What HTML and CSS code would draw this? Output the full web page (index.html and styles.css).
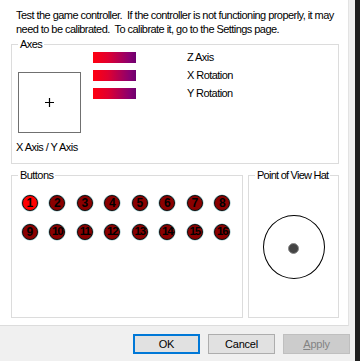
FILE: index.html
```html
<!DOCTYPE html>
<html>
<head>
<meta charset="utf-8">
<link rel="stylesheet" href="styles.css">
</head>
<body>
<div class="window">
  <div class="dialog">
    <div class="page">
      <p class="intro">Test the game controller.&nbsp; If the controller is not functioning properly, it may<br>need to be calibrated.&nbsp; To calibrate it, go to the Settings page.</p>
      <div class="group axes">
        <span class="group-title">Axes</span>
        <div class="axes-body">
          <div class="stick-col">
            <div class="stick">
              <svg width="9" height="9" viewBox="0 0 9 9"><path d="M4.5 0v9M0 4.5h9" stroke="#000" stroke-width="1.2"/></svg>
            </div>
            <div class="stick-label">X Axis / Y Axis</div>
          </div>
          <div class="bars">
            <div class="bar"></div>
            <div class="bar"></div>
            <div class="bar"></div>
          </div>
          <div class="axis-labels">
            <div>Z Axis</div>
            <div>X Rotation</div>
            <div>Y Rotation</div>
          </div>
        </div>
      </div>
      <div class="lower">
        <div class="group buttons">
          <span class="group-title">Buttons</span>
          <div class="btn-grid">
            <div class="cell"><span class="led on">1</span></div>
            <div class="cell"><span class="led">2</span></div>
            <div class="cell"><span class="led">3</span></div>
            <div class="cell"><span class="led">4</span></div>
            <div class="cell"><span class="led">5</span></div>
            <div class="cell"><span class="led">6</span></div>
            <div class="cell"><span class="led">7</span></div>
            <div class="cell"><span class="led">8</span></div>
            <div class="cell"><span class="led">9</span></div>
            <div class="cell"><span class="led two">10</span></div>
            <div class="cell"><span class="led two">11</span></div>
            <div class="cell"><span class="led two">12</span></div>
            <div class="cell"><span class="led two">13</span></div>
            <div class="cell"><span class="led two">14</span></div>
            <div class="cell"><span class="led two">15</span></div>
            <div class="cell"><span class="led two">16</span></div>
          </div>
        </div>
        <div class="group pov">
          <span class="group-title">Point of View Hat</span>
          <div class="pov-body">
            <div class="pov-ring"><div class="pov-dot"></div></div>
          </div>
        </div>
      </div>
    </div>
    <div class="footer">
      <button class="btn default">OK</button>
      <button class="btn">Cancel</button>
      <button class="btn disabled"><u>A</u>pply</button>
    </div>
  </div>
  <div class="behind"></div>
</div>
</body>
</html>
```

FILE: styles.css
```css
* { box-sizing: border-box; }
html, body { margin: 0; padding: 0; }
body {
  width: 360px;
  height: 361px;
  overflow: hidden;
  font-family: "Liberation Sans", Arial, sans-serif;
  font-size: 11px;
  letter-spacing: -0.55px;
  color: #000;
  background: #f0f0f0;
}
.window { display: flex; height: 361px; }
.dialog {
  width: 355px;
  display: flex;
  flex-direction: column;
  background: #f0f0f0;
}
.page {
  width: 349px;
  height: 326px;
  background: #fff;
  border-right: 1px solid #e3e3e3;
  border-bottom: 1px solid #dcdcdc;
  padding: 8px 0 0 11px;
}
.intro {
  margin: 0 0 8px 5px;
  line-height: 14px;
  white-space: nowrap;
}
.group {
  position: relative;
  border: 1px solid #dcdcdc;
}
.group-title {
  position: absolute;
  top: -7px;
  left: 6px;
  padding: 0 2px;
  line-height: 13px;
  background: #fff;
  white-space: nowrap;
}
.pov .group-title { letter-spacing: -0.75px; }
.axes { width: 328px; height: 120px; }
.axes-body { display: flex; align-items: flex-start; padding: 7px 0 0 6px; }
.stick-col { width: 75px; margin-top: 20px; }
.stick {
  width: 63px;
  height: 61px;
  border: 1px solid #707070;
  display: flex;
  align-items: center;
  justify-content: center;
}
.stick-label { margin: 7px 0 0 -2px; line-height: 14px; white-space: nowrap; }
.bars { display: flex; flex-direction: column; gap: 7px; width: 43px; }
.bar {
  height: 11px;
  background: linear-gradient(to right, #ff0010 0%, #e00030 35%, #8a0070 85%, #6e006e 100%);
}
.axis-labels { margin: -4px 0 0 51px; line-height: 18px; }
.lower { display: flex; gap: 5px; margin-top: 11px; }
.buttons { width: 232px; height: 143px; }
.pov { width: 91px; height: 143px; }
.btn-grid {
  display: grid;
  grid-template-columns: repeat(8, 27.5px);
  grid-auto-rows: 29px;
  padding: 12px 0 0 4px;
}
.cell { display: flex; align-items: center; justify-content: center; }
.led {
  width: 16px;
  height: 16px;
  border-radius: 50%;
  background: #8a0000;
  border: 1px solid #111;
  box-shadow: 0 0 0 0.6px rgba(60, 140, 150, 0.55);
  display: flex;
  align-items: center;
  justify-content: center;
  font-size: 12px;
  font-weight: bold;
  letter-spacing: 0;
  line-height: 1;
  color: #000;
}
.led.two { letter-spacing: -1.2px; font-size: 11.5px; }
.led.on { background: #ff0000; }
.pov-body { display: flex; justify-content: center; padding-top: 39px; }
.pov-ring {
  width: 62px;
  height: 64px;
  border-radius: 50%;
  border: 1px solid #000;
  display: flex;
  align-items: center;
  justify-content: center;
}
.pov-dot {
  width: 11px;
  height: 11px;
  border-radius: 50%;
  background: #444;
  border: 1px solid #8a8a8a;
  margin-top: 2px;
}
.footer {
  display: flex;
  justify-content: flex-end;
  gap: 8px;
  padding: 8px 5px 0 0;
}
.btn {
  width: 67px;
  height: 20px;
  padding: 0;
  font-family: "Liberation Sans", Arial, sans-serif;
  font-size: 11px;
  letter-spacing: -0.2px;
  color: #000;
  background: #e1e1e1;
  border: 1px solid #adadad;
}
.btn.default { border: 2px solid #0078d7; }
.btn.disabled { background: #cccccc; border-color: #bfbfbf; color: #838383; }
.btn u { text-decoration: underline; }
.behind {
  width: 5px;
  background: #1f1f1f;
}
```
